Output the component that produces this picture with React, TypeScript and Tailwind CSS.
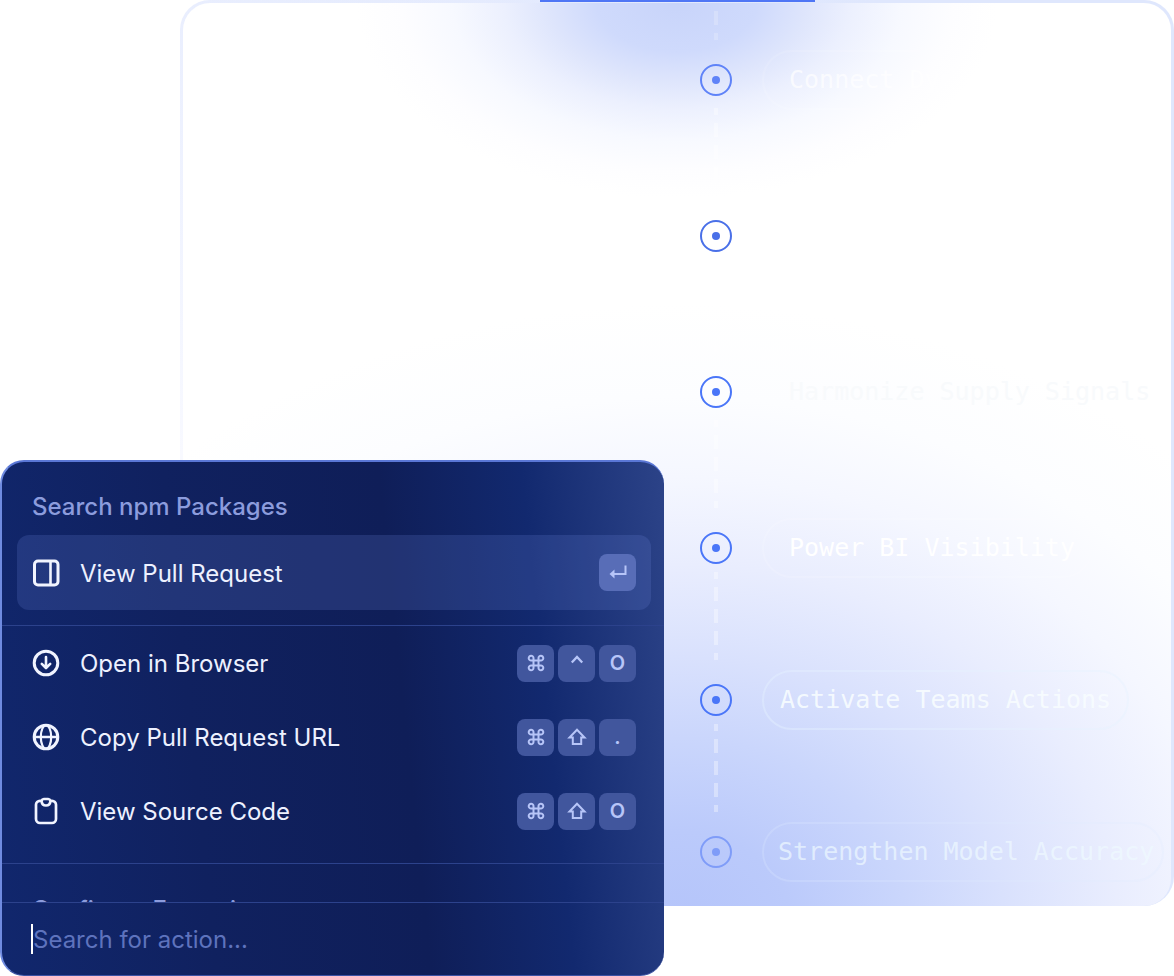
import React from 'react';

type IconName = 'panel' | 'download' | 'globe' | 'clipboard';
type KeyName = 'enter' | 'cmd' | 'ctrl' | 'shift' | 'O' | '.';

interface Action {
  label: string;
  icon: IconName;
  keys: KeyName[];
}

interface Step {
  label?: string;
  row: string;
  line: string;
  marker: string;
  pill: string;
  text: string;
}

const ACTIONS: Action[] = [
  { label: 'Open in Browser', icon: 'download', keys: ['cmd', 'ctrl', 'O'] },
  { label: 'Copy Pull Request URL', icon: 'globe', keys: ['cmd', 'shift', '.'] },
  { label: 'View Source Code', icon: 'clipboard', keys: ['cmd', 'shift', 'O'] },
];

const STEPS: Step[] = [
  { label: 'Connect Dynamics', row: 'h-[156px]', line: '-mt-0.5', marker: 'text-[#5f83f8]', pill: 'border-white/10 pl-[25px] pr-4', text: 'text-white/70' },
  { row: 'h-[156px]', line: '-mt-0.5', marker: 'text-[#4a70e8]', pill: '', text: '' },
  { label: 'Harmonize Supply Signals', row: 'h-[156px]', line: '-mt-0.5', marker: 'text-[#4a76f8]', pill: 'border-transparent pl-[25px] pr-0', text: 'text-[#f8fafc]' },
  { label: 'Power BI Visibility', row: 'h-[152px]', line: '-mt-1.5', marker: 'text-[#4a76f8]', pill: 'border-white/15 pl-[25px] pr-4', text: 'text-white' },
  { label: 'Activate Teams Actions', row: 'h-[152px]', line: '-mt-1.5', marker: 'text-[#4a76f8]', pill: 'border-[#e6f2fe]/40 px-4', text: 'text-[#f8fdff]/90' },
  { label: 'Strengthen Model Accuracy', row: 'h-[60px]', line: '', marker: 'text-[#7f9cf8]', pill: 'border-[#e0eafe]/25 pl-[14px] pr-2', text: 'text-[#effaff]/70' },
];

const ActionIcon = ({ name }: { name: IconName }) => (
  <svg
    className="size-7 shrink-0 text-[#f1f4ff]"
    viewBox="0 0 28 28"
    fill="none"
    stroke="currentColor"
    strokeWidth="3"
    strokeLinecap="round"
    strokeLinejoin="round"
    aria-hidden="true"
  >
    {name === 'panel' && (
      <>
        <rect x="2.500" y="2" width="23.500" height="24" rx="3.500" />
        <path d="M18.500 3v22" strokeWidth="2.600" />
      </>
    )}
    {name === 'download' && (
      <>
        <circle cx="14" cy="14" r="11.800" />
        <path d="M14 8v10.500M9.800 14.800l4.200 4.200 4.200-4.200" strokeWidth="2.600" />
      </>
    )}
    {name === 'globe' && (
      <>
        <circle cx="14" cy="14" r="11.800" />
        <ellipse cx="14" cy="14" rx="5.200" ry="11.800" strokeWidth="2.200" />
        <path d="M2.500 14h23" strokeWidth="2.400" />
      </>
    )}
    {name === 'clipboard' && (
      <path
        d="M9.500 3.800H8a4 4 0 0 0-4 4V22a4 4 0 0 0 4 4h12a4 4 0 0 0 4-4V7.800a4 4 0 0 0-4-4h-1.500M9.500 3.800c.4-1 1.200-1.800 2.300-1.800h4.400c1.100 0 1.900.8 2.300 1.800-.3 2.700-2 4.700-4.500 4.700s-4.200-2-4.500-4.700z"
        strokeWidth="2.700"
      />
    )}
  </svg>
);

const KeyGlyph = ({ name }: { name: KeyName }) => {
  if (name === 'O' || name === '.') {
    return <span>{name}</span>;
  }
  return (
    <svg className="size-5" viewBox="0 0 20 20" fill="none" stroke="currentColor" strokeWidth="2" aria-hidden="true">
      {name === 'enter' && (
        <>
          <path d="M17.500 2.500v8.500H5" />
          <path d="M6.500 6.500 1.500 11l5 4.500z" fill="currentColor" stroke="none" />
        </>
      )}
      {name === 'cmd' && (
        <path d="M7.500 7.500h5v5h-5zM7.500 7.500H5.200a2.400 2.400 0 1 1 2.300-2.400zM12.500 7.500V5.100a2.400 2.400 0 1 1 2.300 2.400zM12.500 12.500h2.300a2.400 2.400 0 1 1-2.300 2.400zM7.500 12.500v2.400a2.400 2.400 0 1 1-2.300-2.400z" />
      )}
      {name === 'ctrl' && <path d="m4.800 9.500 5.200-5.500 5.200 5.500" strokeWidth="2.300" />}
      {name === 'shift' && <path d="M10 2.800 17.500 10.500h-3.300v6.500H5.800v-6.500H2.500z" />}
    </svg>
  );
};

const Keys = ({ keys, active }: { keys: KeyName[]; active?: boolean }) => (
  <span className="flex gap-1">
    {keys.map((key) => (
      <kbd
        key={key}
        className={`flex size-[37px] items-center justify-center rounded-lg font-['Inter',sans-serif] text-xl font-semibold text-[#b7c5f8] ${
          active ? 'bg-[#586db7]' : 'bg-[#41569d]'
        }`}
      >
        <KeyGlyph name={key} />
      </kbd>
    ))}
  </span>
);

const ActionRow = ({ action, active }: { action: Action; active?: boolean }) => (
  <button
    type="button"
    className={`flex w-full items-center rounded-xl px-[15px] text-left text-2xl text-[#edf1ff] ${
      active ? 'h-[75px] bg-[#6c87dc]/20' : 'h-[74px]'
    }`}
  >
    <ActionIcon name={action.icon} />
    <span className="ml-5 flex-1 pt-0.5">{action.label}</span>
    <Keys keys={action.keys} active={active} />
  </button>
);

const CommandPalette = () => (
  <section className="z-10 col-start-1 row-start-1 w-full max-w-[664px] self-end overflow-hidden rounded-3xl border-t-2 border-b border-l-2 border-t-[#5a77d6] border-b-[#3b52a4] border-l-[#6f8be0] bg-[linear-gradient(84deg,#11276d_0%,#10215f_30%,#0f1e58_60%,#12296f_80%,#2c4388_100%)]">
    <h2 className="px-[30px] pt-[29px] pb-3 text-2xl font-medium text-[#8c9cdd]">Search npm Packages</h2>
    <div className="mr-[13px] mb-[15px] ml-[15px]">
      <ActionRow action={{ label: 'View Pull Request', icon: 'panel', keys: ['enter'] }} active />
    </div>
    <ul className="border-y border-[#2c428c] pr-[13px] pb-[15px] pl-[15px]">
      {ACTIONS.map((action) => (
        <li key={action.label}>
          <ActionRow action={action} />
        </li>
      ))}
    </ul>
    {/* next group, scrolled almost out of view */}
    <div className="h-[38px] overflow-hidden px-[30px] pt-[30px]">
      <h2 className="text-2xl font-medium text-[#8c9cdd]">Configure Extension</h2>
    </div>
    <div className="flex h-[73px] items-center border-t border-[#2c428c] px-[29px]">
      <span className="h-[30px] w-0.5 bg-white" />
      <input
        type="text"
        aria-label="Search for action"
        placeholder="Search for action..."
        className="min-w-0 flex-1 bg-transparent pt-0.5 text-2xl text-white outline-none placeholder:text-[#5e73bd]"
      />
    </div>
  </section>
);

const Marker = ({ className }: { className: string }) => (
  <svg className={`size-8 shrink-0 ${className}`} viewBox="0 0 32 32" aria-hidden="true">
    <circle cx="16" cy="16" r="15" fill="none" stroke="currentColor" strokeWidth="2" />
    <circle cx="16" cy="16" r="4" fill="currentColor" />
  </svg>
);

const Timeline = () => (
  <div className="pl-[517px]">
    <svg className="ml-[14px] block h-[37px] w-1 text-white/20" aria-hidden="true">
      <path d="M2 0v37" stroke="currentColor" strokeWidth="4" strokeDasharray="14 8" strokeDashoffset="58" />
    </svg>
    <ol className="pt-[10px]">
      {STEPS.map((step, i) => (
        <li key={i} className={step.row}>
          <div className="flex h-[60px] items-center gap-[30px]">
            <Marker className={step.marker} />
            {step.label && (
              <span className={`flex h-[60px] items-center rounded-full border-2 whitespace-pre font-['DejaVu_Sans_Mono',monospace] text-[25px] ${step.pill} ${step.text}`}>
                {step.label}
              </span>
            )}
          </div>
          {i < STEPS.length - 1 && (
            <svg className={`ml-[14px] block h-[88px] w-1 text-white/35 ${step.line}`} aria-hidden="true">
              <path d="M2 0v88" stroke="currentColor" strokeWidth="4" strokeDasharray="14 8" strokeDashoffset="7" />
            </svg>
          )}
        </li>
      ))}
    </ol>
  </div>
);

const TimelineCard = () => (
  <section className="col-start-1 row-start-1 mb-[70px] ml-[180px] overflow-hidden rounded-[30px] bg-[linear-gradient(to_right,transparent,#dfe7fd_70%),linear-gradient(to_bottom,#e9eefe,#f8f9ff_50%)] px-[3px]">
    <div className="h-[3px]">
      <div className="mx-auto h-0.5 w-[275px] bg-[#4f76f5]" />
    </div>
    <div className="min-h-[903px] rounded-[27px] bg-white bg-[radial-gradient(320px_195px_at_50%_0,#c8d4fa_0%,#cfdafc_25%,#dee5fc_40%,#ecf0fe_54%,#f7f9ff_70%,#fdfdff_86%,transparent_100%),radial-gradient(760px_620px_at_50%_102%,#b4c4fa_0%,#bbcafb_15%,#cad6fc_30%,#d9e1fd_43%,#e9edfe_58%,#f5f7ff_72%,#fcfdff_85%,#ffffff_100%)]">
      <Timeline />
    </div>
  </section>
);

const App = () => {
  return (
    <main className="grid min-h-screen w-full grid-cols-1 bg-white font-['Inter',sans-serif]">
      <TimelineCard />
      <CommandPalette />
    </main>
  );
};

export default App;
